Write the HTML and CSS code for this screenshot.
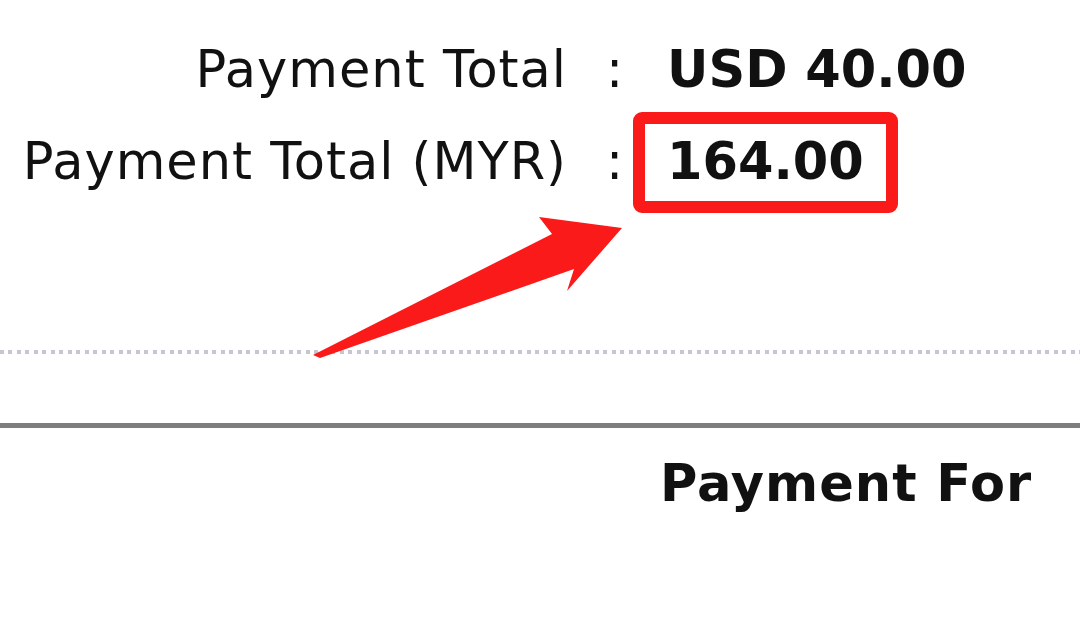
FILE: index.html
```html
<!DOCTYPE html>
<html lang="en">
<head>
  <meta charset="UTF-8">
  <title>Payment Summary</title>
  <link rel="stylesheet" href="styles.css">
</head>
<body>

  <div class="page">
    <div class="summary">
      <div class="label">Payment Total</div>
      <div class="colon">:</div>
      <div class="value">USD 40.00</div>

      <div class="label">Payment Total (MYR)</div>
      <div class="colon">:</div>
      <div class="value marked">164.00</div>
    </div>

    <div class="dots"></div>

    <table class="items">
      <thead>
        <tr>
          <th class="spacer"></th>
          <th>Payment For</th>
        </tr>
      </thead>
    </table>

    <!-- callout arrow pointing at the converted amount -->
    <svg class="arrow" width="1080" height="633" viewBox="0 0 1080 633">
      <polygon points="313,355 552,234 539,217 622,228 567,291 574,269 320,358" fill="#fb1a1a"/>
    </svg>
  </div>

</body>
</html>
```

FILE: styles.css
```css
body { margin: 0; background: #fff; font-family: "DejaVu Sans", Verdana, sans-serif; color: #111; }
.page { position: relative; width: 1080px; height: 633px; overflow: hidden; }

.summary { display: grid; grid-template-columns: 567px 66px auto; row-gap: 12px; align-items: baseline; padding-top: 40px; font-size: 51px; line-height: 60px; }
.label { text-align: right; letter-spacing: 1px; }
.colon { padding-left: 39px; }
.value { font-weight: bold; justify-self: start; padding: 0 22px; border-left: 12px solid transparent; }
.value.marked { border: 12px solid #fb1a1a; border-radius: 9px; padding: 8px 22px 9px; }

.dots { margin-top: 137px; height: 4px; background: repeating-linear-gradient(90deg, #c6c7d3 0 4px, transparent 4px 8.5px); }

.items { width: 100%; margin-top: 69px; border-collapse: collapse; border-top: 5px solid #7e7e7e; font-size: 51px; line-height: 60px; }
.items th { padding: 26px 0 0; text-align: left; font-weight: bold; letter-spacing: 1px; }
.items th.spacer { width: 660px; }

.arrow { position: absolute; left: 0; top: 0; }
```
